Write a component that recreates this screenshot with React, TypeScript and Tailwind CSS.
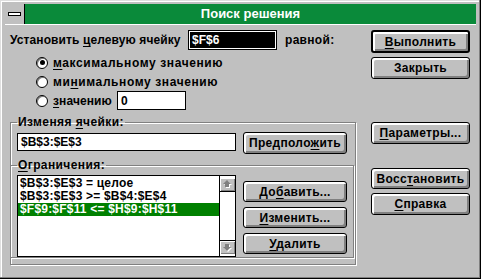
import React from "react";

const face = "font-['Liberation_Sans',Arial,sans-serif]";

function U({ children }: { children: React.ReactNode }) {
  return <span className="underline underline-offset-2 decoration-1">{children}</span>;
}

function Button({
  children,
  className = "",
  primary = false,
}: {
  children: React.ReactNode;
  className?: string;
  primary?: boolean;
}) {
  return (
    <div
      className={`flex items-center justify-center rounded-[3px] bg-[#c0c0c0] text-[12px] font-bold tracking-[0.3px] text-black border-black shadow-[inset_2px_2px_0_#fff,inset_-2px_-2px_0_#808080] ${
        primary ? "border-2" : "border"
      } ${className}`}
    >
      <span className="leading-[14px]">{children}</span>
    </div>
  );
}

function Radio({ checked = false }: { checked?: boolean }) {
  return (
    <span className="flex h-[12px] w-[12px] items-center justify-center rounded-full border border-black bg-white shadow-[inset_1px_1px_0_#808080]">
      {checked && <span className="h-[5px] w-[5px] rounded-full bg-black" />}
    </span>
  );
}

function Arrow({ down = false }: { down?: boolean }) {
  const pts = down ? "4,8 0,4 2,4 2,1 6,1 6,4 8,4" : "4,0 8,4 6,4 6,7 2,7 2,4 0,4";
  return (
    <svg width="10" height="10" viewBox="0 0 10 10" className="block">
      <polygon points={pts} transform="translate(1,1)" fill="#fff" />
      <polygon points={pts} fill="#808080" />
    </svg>
  );
}

const constraints = ["$B$3:$E$3 = целое", "$B$3:$E$3 >= $B$4:$E$4", "$F$9:$F$11 <= $H$9:$H$11"];

export default function App() {
  return (
    <div
      className={`${face} h-[279px] w-[481px] overflow-hidden bg-[#c0c0c0] text-black shadow-[inset_-1px_-1px_0_#000,inset_-2px_-2px_0_#808080,inset_1px_1px_0_#dfdfdf,inset_2px_2px_0_#fff]`}
    >
      {/* Title bar */}
      <div className="mx-[5px] mt-[4px] flex h-[20px]">
        <div className="flex w-[20px] items-center justify-center border-r border-black bg-[#c0c0c0]">
          <span className="h-[4px] w-[13px] border border-black bg-white" />
        </div>
        <div className="flex flex-1 items-center justify-center bg-[#0a8a3a] text-[13px] font-bold text-white">
          Поиск решения
        </div>
      </div>

      <div className="mx-[5px] flex border-t border-white pl-[5px] text-[12px] font-bold">
        {/* Left side */}
        <div className="w-[346px]">
          <div className="mt-[5px] flex h-[20px] items-center">
            <span className="w-[178px] tracking-[0.1px]">
              Установить <U>ц</U>елевую ячейку
            </span>
            <div className="flex h-[20px] w-[89px] items-center border border-black bg-black pl-[3px] text-white shadow-[inset_0_0_0_1px_#fff]">
              $F$6
            </div>
            <span className="ml-[8px] tracking-[0.3px]">равной:</span>
          </div>

          <div className="mt-[3px] pl-[26px]">
            <div className="flex h-[19px] items-center gap-[5px] tracking-[0.6px]">
              <Radio checked />
              <span>
                <U>м</U>аксимальному значению
              </span>
            </div>
            <div className="flex h-[19px] items-center gap-[5px] tracking-[0.6px]">
              <Radio />
              <span>
                ми<U>н</U>имальному значению
              </span>
            </div>
            <div className="flex h-[19px] items-center gap-[5px]">
              <Radio />
              <span className="w-[59px] tracking-[0.1px]">
                <U>з</U>начению
              </span>
              <div className="flex h-[19px] w-[69px] items-center border border-black bg-white pl-[3px]">0</div>
            </div>
          </div>

          <fieldset className="mt-[5px] border border-[#808080] pb-[6px] pl-[6px] pr-[1px] shadow-[inset_1px_1px_0_#fff,1px_1px_0_#fff]">
            <legend className="px-[1px] leading-[14px] tracking-[0.4px]">
              Изменяя <U>я</U>чейки:
            </legend>
            <div className="mt-[3px] flex items-start">
              <div className="mt-[1px] flex h-[18px] w-[219px] items-center border border-black bg-white pl-[3px]">
                $B$3:$E$3
              </div>
              <Button className="ml-[7px] h-[22px] w-[104px]">
                Предполо<U>ж</U>ить
              </Button>
            </div>

            <fieldset className="-ml-[6px] mt-[4px] border border-l-0 border-[#808080] pl-[6px] shadow-[inset_0_1px_0_#fff,1px_1px_0_#fff]">
              <legend className="px-[1px] leading-[14px] tracking-[0.4px]">
                <U>О</U>граничения:
              </legend>
              <div className="mt-[3px] flex items-start">
                <div className="flex h-[82px] w-[219px] border border-black bg-white">
                  <div className="flex-1 pt-[1px] leading-[13px] tracking-[0.2px]">
                    {constraints.map((c, i) => (
                      <div key={c} className={`h-[13px] pl-[2px] ${i === 2 ? "bg-[#008000] text-white" : ""}`}>
                        {c}
                      </div>
                    ))}
                  </div>
                  <div className="flex w-[16px] flex-col border-l border-black">
                    <div className="mt-[2px] flex h-[14px] items-center justify-center border-b border-black bg-[#c0c0c0] shadow-[inset_1px_1px_0_#fff,inset_-1px_-1px_0_#808080]">
                      <Arrow />
                    </div>
                    <div className="flex-1 bg-white" />
                    <div className="mb-[2px] flex h-[14px] items-center justify-center border-t border-black bg-[#c0c0c0] shadow-[inset_1px_1px_0_#fff,inset_-1px_-1px_0_#808080]">
                      <Arrow down />
                    </div>
                  </div>
                </div>
                <div className="ml-[7px] mt-[6px] flex flex-col gap-[5px]">
                  <Button className="h-[21px] w-[104px]">
                    До<U>б</U>авить...
                  </Button>
                  <Button className="h-[21px] w-[104px]">
                    <U>И</U>зменить...
                  </Button>
                  <Button className="h-[21px] w-[104px]">
                    <U>У</U>далить
                  </Button>
                </div>
              </div>
            </fieldset>
          </fieldset>
        </div>

        {/* Right side */}
        <div className="ml-[15px] flex w-[99px] flex-col">
          <Button primary className="mt-[5px] h-[23px]">
            <U>В</U>ыполнить
          </Button>
          <Button className="mt-[4px] h-[22px]">Закрыть</Button>
          <Button className="mt-[43px] h-[22px]">
            <U>П</U>араметры...
          </Button>
          <Button className="mt-[24px] h-[21px]">
            Восс<U>т</U>ановить
          </Button>
          <Button className="mt-[4px] h-[22px]">
            <U>С</U>правка
          </Button>
        </div>
      </div>
    </div>
  );
}
